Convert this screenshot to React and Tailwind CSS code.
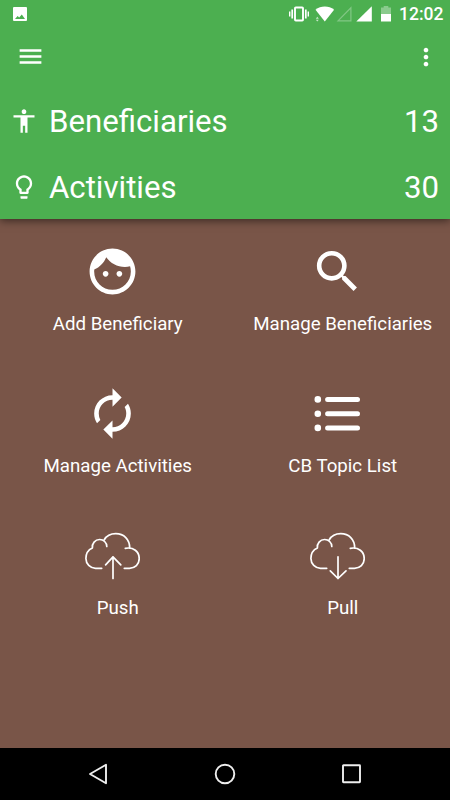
import React from 'react';
import {
  MdAccessibility,
  MdAutorenew,
  MdMenu,
  MdMoreVert,
  MdSearch,
} from 'react-icons/md';

const StatusBar = () => (
  <div className="flex h-[27px] shrink-0 items-center justify-between pl-[13px] pr-[6.5px]">
    <svg className="h-[14px] w-[14px]" viewBox="0 0 14 14">
      <rect width="14" height="14" rx="1" fill="#fff" />
      <path d="M2 12L4.6 8.9L6.2 10.4L8.8 7.6L12 12Z" fill="#4caf50" />
    </svg>
    <div className="flex items-center">
      {/* vibrate */}
      <svg className="h-[16px] w-[20px]" viewBox="0 0 20 16" fill="none" stroke="#fff">
        <rect x="6" y="1.5" width="8" height="13" rx="0.8" strokeWidth="1.9" />
        <path d="M3.2 3.5V12.5M16.8 3.5V12.5" strokeWidth="1.7" />
        <path d="M0.7 5.5V10.5M19.3 5.5V10.5" strokeWidth="1.4" />
      </svg>
      {/* wifi */}
      <svg className="ml-[6px] h-[16px] w-[20px]" viewBox="0 0 20 16" fill="#fff">
        <path d="M0.5 3.8C3.2 1.6 6.3 0.5 9.8 0.5S16.4 1.6 19.1 3.8L9.8 15.5Z" />
        <path d="M0.8 12.8L2.3 10.8L3.8 12.8ZM0.8 13.8L2.3 15.6L3.8 13.8Z" opacity="0.7" />
      </svg>
      {/* empty signal */}
      <svg className="ml-[1px] h-[16px] w-[16px]" viewBox="0 0 16 16" fill="none">
        <path d="M2 14.8L14.9 1.8V14.8Z" stroke="#fff" strokeWidth="1.2" opacity="0.3" />
      </svg>
      {/* full signal */}
      <svg className="ml-[4px] h-[16px] w-[16px]" viewBox="0 0 16 16" fill="#fff">
        <path d="M0.3 15.5L15.8 0.2V15.5Z" />
      </svg>
      {/* battery */}
      <svg className="ml-[9px] h-[16px] w-[10px]" viewBox="0 0 10 16" fill="#fff">
        <path d="M0 8V1.6H2.7V0H7.3V1.6H10V8Z" opacity="0.35" />
        <path d="M0 8H10V15.5H0Z" />
      </svg>
      <span className="ml-[8px] pt-[2px] text-[17.5px] font-medium leading-none">12:02</span>
    </div>
  </div>
);

const Lightbulb = ({ className }) => (
  <svg className={className} viewBox="0 0 24 24" fill="currentColor">
    <path d="M9 21.5c0 .3.2.5.5.5h5c.3 0 .5-.2.5-.5V20H9v1.5zm3-19.5C8.1 2 5 5.1 5 9c0 2.4 1.2 4.5 3 5.7V17c0 .5.4 1 1 1h6c.6 0 1-.5 1-1v-2.3c1.8-1.3 3-3.4 3-5.7 0-3.9-3.1-7-7-7zm2.9 11.1l-.9.6V16h-4v-2.3l-.9-.6C7.8 12.2 7 10.6 7 9c0-2.8 2.2-5 5-5s5 2.2 5 5c0 1.6-.8 3.2-2.1 4.1z" />
  </svg>
);

const StatRow = ({ icon: Icon, label, value }) => (
  <div className="flex h-[66px] shrink-0 items-center pl-[10px] pr-[11px] pt-[4px]">
    <Icon className="-mt-[2px] h-[28px] w-[28px]" />
    <span className="ml-[11px] text-[31.2px] leading-none">{label}</span>
    <span className="ml-auto text-[31.2px] leading-none">{value}</span>
  </div>
);

const Face = ({ className }) => (
  <svg className={className} viewBox="0 0 24 24" fill="currentColor">
    <path d="M9 11.75c-.69 0-1.25.56-1.25 1.25s.56 1.25 1.25 1.25 1.25-.56 1.25-1.25-.56-1.25-1.25-1.25zm6 0c-.69 0-1.25.56-1.25 1.25s.56 1.25 1.25 1.25 1.25-.56 1.25-1.25-.56-1.25-1.25-1.25zM12 2C6.48 2 2 6.48 2 12s4.48 10 10 10 10-4.48 10-10S17.52 2 12 2zm0 18c-4.41 0-8-3.59-8-8 0-.29.02-.58.05-.86 2.36-1.05 4.23-2.98 5.21-5.37C11.07 8.33 14.05 10 17.42 10c.78 0 1.53-.09 2.25-.26.21.71.33 1.47.33 2.26 0 4.41-3.59 8-8 8z" />
  </svg>
);

const TopicList = ({ className }) => (
  <svg className={className} viewBox="0 0 55 55" fill="none" stroke="#fff" strokeLinecap="round">
    <path d="M17.6 13.4H47.5M17.6 27.7H47.5M17.6 41.9H47.5" strokeWidth="5" />
    <path d="M7.8 13.4V13.41M7.8 27.7V27.71M7.8 41.9V41.91" strokeWidth="6.6" />
  </svg>
);

const Cloud = ({ className, arrow }) => (
  <svg
    className={className}
    viewBox="0 0 55 55"
    fill="none"
    stroke="#fff"
    strokeWidth="1.7"
    strokeLinecap="round"
    strokeLinejoin="round"
  >
    <path d="M16.7 40.3H10.5A9.8 9.8 0 0 1 0.9 30.6C0.9 25.6 3.3 21.8 7.4 20A7.4 7.4 0 0 1 14.6 11.5A7.1 7.1 0 0 1 21.8 18.5" />
    <path d="M19.1 12C21.4 8 25.5 5.7 30.8 5.7C39 5.7 44.6 11.5 44.7 19.9" />
    <path d="M40.3 20.3C48.5 18.8 54.2 23.5 54.2 30.5C54.2 36.5 50 40.3 44.5 40.3H39.3" />
    <path d={arrow} />
  </svg>
);

const Push = ({ className }) => (
  <Cloud className={className} arrow="M28 50.5V28.8M20.6 36.8L28 28.8L35.8 36.8" />
);

const Pull = ({ className }) => (
  <Cloud className={className} arrow="M28 28.8V50.5M20.3 42.8L28 50.5L36 42.8" />
);

const actions = [
  { label: 'Add Beneficiary', icon: Face },
  { label: 'Manage Beneficiaries', icon: MdSearch },
  { label: 'Manage Activities', icon: MdAutorenew },
  { label: 'CB Topic List', icon: TopicList },
  { label: 'Push', icon: Push },
  { label: 'Pull', icon: Pull },
];

const ActionTile = ({ icon: Icon, label }) => (
  <div className="flex h-[142px] flex-col items-center">
    <Icon className="h-[55px] w-[55px] shrink-0" />
    <span className="mt-[14px] whitespace-nowrap pl-[10.5px] text-[18.7px] leading-[22px] text-white">
      {label}
    </span>
  </div>
);

const NavBar = () => (
  <div className="flex h-[52px] shrink-0 items-center justify-between bg-black px-[88px]">
    <svg className="h-[22px] w-[22px]" viewBox="0 0 22 22" fill="none" stroke="#eee" strokeWidth="1.9">
      <path d="M2 11L18 1.8V20.2Z" strokeLinejoin="round" />
    </svg>
    <svg className="h-[22px] w-[22px]" viewBox="0 0 22 22" fill="none" stroke="#eee" strokeWidth="1.9">
      <circle cx="11" cy="11" r="9.3" />
    </svg>
    <svg className="h-[22px] w-[22px]" viewBox="0 0 22 22" fill="none" stroke="#eee" strokeWidth="1.9">
      <rect x="3" y="2.2" width="17" height="17" rx="0.5" />
    </svg>
  </div>
);

export default function App() {
  return (
    <div className="flex h-[800px] w-[450px] flex-col overflow-hidden bg-[#795548] font-['Roboto',sans-serif] text-white">
      <header className="z-10 flex h-[219px] shrink-0 flex-col bg-[#4caf50] shadow-[0_2px_8px_rgba(0,0,0,0.5)]">
        <StatusBar />
        <div className="flex h-[60px] shrink-0 items-center justify-between pb-[1px] pl-[16px] pr-[10px]">
          <MdMenu className="h-[29px] w-[29px]" />
          <MdMoreVert className="mt-px h-[28px] w-[28px]" />
        </div>
        <StatRow icon={MdAccessibility} label="Beneficiaries" value={13} />
        <StatRow icon={Lightbulb} label="Activities" value={30} />
      </header>

      <main className="grid flex-1 grid-cols-2 content-start pt-[25px]">
        {actions.map((action) => (
          <ActionTile key={action.label} {...action} />
        ))}
      </main>

      <NavBar />
    </div>
  );
}
